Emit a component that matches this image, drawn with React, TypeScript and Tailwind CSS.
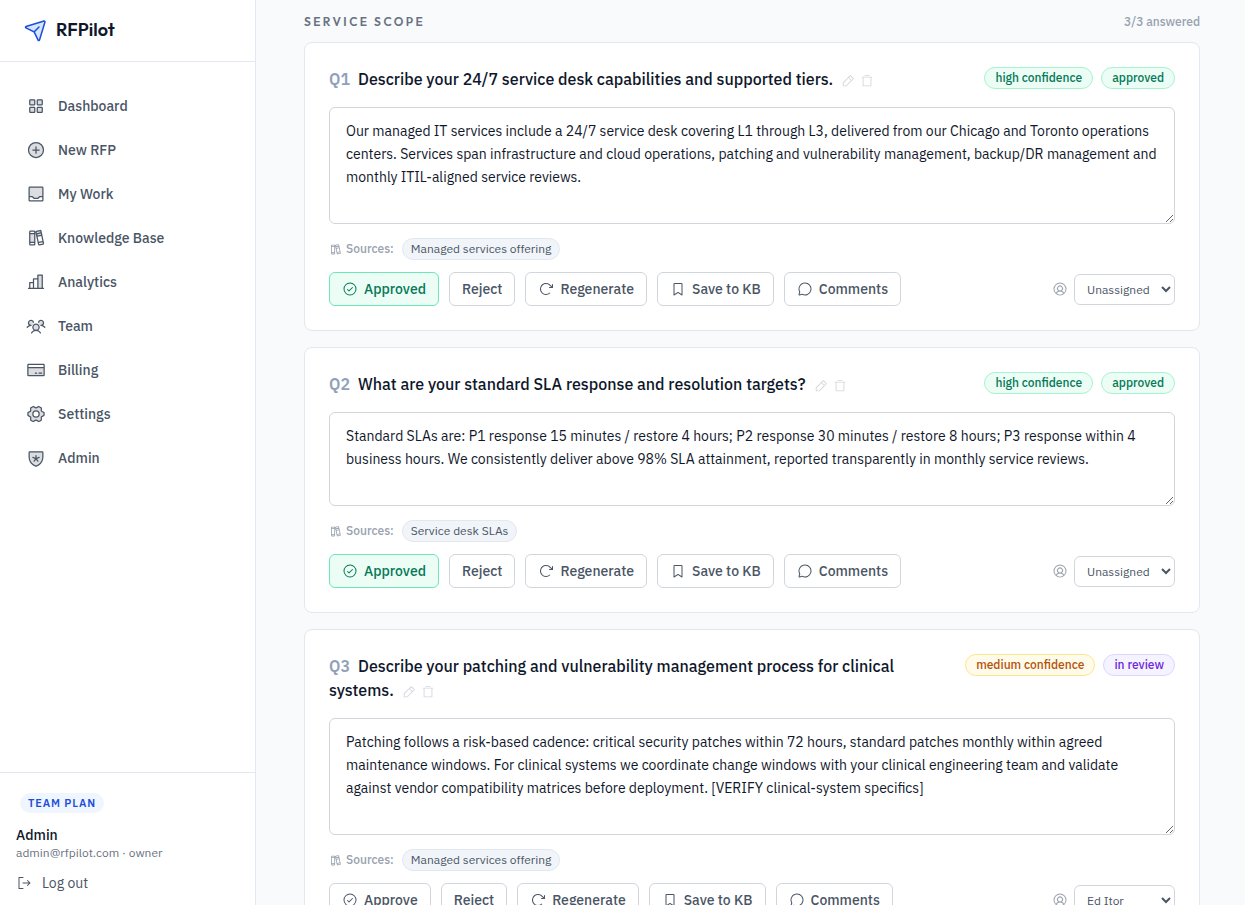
import { useState } from 'react';
import clsx from 'clsx';
import type { IconType } from 'react-icons';
import {
  PiArrowClockwise,
  PiBookmarkSimple,
  PiBooks,
  PiBooksDuotone,
  PiChartBarDuotone,
  PiChatCircle,
  PiCheckCircle,
  PiCreditCardDuotone,
  PiGearSixDuotone,
  PiPaperPlaneTiltDuotone,
  PiPencilSimple,
  PiPlusCircleDuotone,
  PiShieldStarDuotone,
  PiSignOut,
  PiSquaresFourDuotone,
  PiTrashSimple,
  PiTrayDuotone,
  PiUserCircle,
  PiUsersThreeDuotone,
} from 'react-icons/pi';

type Confidence = 'high' | 'medium';
type Status = 'approved' | 'in review';

interface Question {
  id: number;
  title: string;
  answer: string;
  rows: number;
  source: string;
  confidence: Confidence;
  status: Status;
  assignee: string;
}

const NAV: { label: string; icon: IconType }[] = [
  { label: 'Dashboard', icon: PiSquaresFourDuotone },
  { label: 'New RFP', icon: PiPlusCircleDuotone },
  { label: 'My Work', icon: PiTrayDuotone },
  { label: 'Knowledge Base', icon: PiBooksDuotone },
  { label: 'Analytics', icon: PiChartBarDuotone },
  { label: 'Team', icon: PiUsersThreeDuotone },
  { label: 'Billing', icon: PiCreditCardDuotone },
  { label: 'Settings', icon: PiGearSixDuotone },
  { label: 'Admin', icon: PiShieldStarDuotone },
];

const QUESTIONS: Question[] = [
  {
    id: 1,
    title: 'Describe your 24/7 service desk capabilities and supported tiers.',
    answer:
      'Our managed IT services include a 24/7 service desk covering L1 through L3, delivered from our Chicago and Toronto operations centers. Services span infrastructure and cloud operations, patching and vulnerability management, backup/DR management and monthly ITIL-aligned service reviews.',
    rows: 4,
    source: 'Managed services offering',
    confidence: 'high',
    status: 'approved',
    assignee: 'Unassigned',
  },
  {
    id: 2,
    title: 'What are your standard SLA response and resolution targets?',
    answer:
      'Standard SLAs are: P1 response 15 minutes / restore 4 hours; P2 response 30 minutes / restore 8 hours; P3 response within 4 business hours. We consistently deliver above 98% SLA attainment, reported transparently in monthly service reviews.',
    rows: 3,
    source: 'Service desk SLAs',
    confidence: 'high',
    status: 'approved',
    assignee: 'Unassigned',
  },
  {
    id: 3,
    title: 'Describe your patching and vulnerability management process for clinical systems.',
    answer:
      'Patching follows a risk-based cadence: critical security patches within 72 hours, standard patches monthly within agreed maintenance windows. For clinical systems we coordinate change windows with your clinical engineering team and validate against vendor compatibility matrices before deployment. [VERIFY clinical-system specifics]',
    rows: 4,
    source: 'Managed services offering',
    confidence: 'medium',
    status: 'in review',
    assignee: 'Ed Itor',
  },
];

const BADGE_STYLES: Record<Confidence | Status, string> = {
  high: 'border-[#a7f3d0] bg-[#ecfdf5] text-[#047857]',
  medium: 'border-[#fde68a] bg-[#fffbeb] text-[#b45309]',
  approved: 'border-[#a7f3d0] bg-[#ecfdf5] text-[#047857]',
  'in review': 'border-[#ddd6fe] bg-[#f5f3ff] text-[#6d28d9]',
};

function Badge({ kind, label }: { kind: Confidence | Status; label: string }) {
  return (
    <span
      className={clsx(
        'rounded-full border px-2.5 py-0.5 text-xs font-medium whitespace-nowrap',
        BADGE_STYLES[kind],
      )}
    >
      {label}
    </span>
  );
}

function ActionButton({
  icon: Icon,
  label,
  active = false,
  onClick,
}: {
  icon?: IconType;
  label: string;
  active?: boolean;
  onClick?: () => void;
}) {
  return (
    <button
      type="button"
      onClick={onClick}
      className={clsx(
        'flex items-center gap-1.5 rounded-md border px-3 py-1.5 text-sm font-medium',
        active
          ? 'border-[#6ee7b7] bg-[#ecfdf5] text-[#047857]'
          : 'border-gray-300 bg-white text-gray-600 hover:bg-slate-50',
      )}
    >
      {Icon && <Icon size={16} />}
      {label}
    </button>
  );
}

function Sidebar() {
  return (
    <aside className="flex w-64 shrink-0 flex-col border-r border-slate-200 bg-white">
      <div className="flex h-[62px] items-center gap-2 border-b border-slate-200 px-6 pb-0.5">
        <PiPaperPlaneTiltDuotone size={24} className="text-[#1d4ed8] [&_path:first-child]:fill-blue-500" />
        <span className="font-['Outfit','Open_Sans',sans-serif] text-lg font-semibold text-slate-900">
          RFPilot
        </span>
      </div>

      <nav className="flex flex-1 flex-col gap-1 px-3 py-6">
        {NAV.map(({ label, icon: Icon }) => (
          <a
            key={label}
            href="#"
            className="flex items-center gap-3 rounded-md px-3.5 py-2.5 text-sm font-medium text-gray-600 hover:bg-slate-50"
          >
            <Icon size={20} />
            {label}
          </a>
        ))}
      </nav>

      <div className="border-t border-slate-200 px-4 pt-4 pb-3">
        <span className="ml-1 inline-block rounded-full bg-blue-50 px-2 py-0.5 text-[11px]/4 font-semibold tracking-[0.08em] text-[#1d4ed8] uppercase">
          Team plan
        </span>
        <p className="mt-3 text-sm font-medium text-slate-900">Admin</p>
        <p className="text-xs text-gray-500">admin@rfpilot.com · owner</p>
        <button type="button" className="mt-3 flex items-center gap-2.5 text-sm text-gray-600">
          <PiSignOut size={16} />
          Log out
        </button>
      </div>
    </aside>
  );
}

function QuestionCard({ question }: { question: Question }) {
  const [answer, setAnswer] = useState(question.answer);
  const [status, setStatus] = useState<Status>(question.status);
  const [assignee, setAssignee] = useState(question.assignee);
  const approved = status === 'approved';
  const assigneeId = `assignee-${question.id}`;

  return (
    <article className="rounded-lg border border-slate-200 bg-white p-6">
      <div className="flex items-start justify-between gap-4">
        <h3 className="max-w-[600px] text-base font-medium text-slate-900">
          <span className="mr-2 font-semibold text-slate-400">{`Q${question.id}`}</span>
          <label htmlFor={`answer-${question.id}`}>{question.title}</label>
          <span className="ml-2 inline-flex gap-[5px] align-middle text-gray-300">
            <button type="button" aria-label="Edit question">
              <PiPencilSimple size={14} />
            </button>
            <button type="button" aria-label="Delete question">
              <PiTrashSimple size={14} />
            </button>
          </span>
        </h3>
        <div className="flex shrink-0 gap-2">
          <Badge kind={question.confidence} label={`${question.confidence} confidence`} />
          <Badge kind={status} label={status} />
        </div>
      </div>

      <textarea
        id={`answer-${question.id}`}
        rows={question.rows}
        value={answer}
        onChange={(e) => setAnswer(e.target.value)}
        className="mt-4 block w-full resize-y rounded-md border border-gray-300 bg-white px-4 py-3 text-sm leading-relaxed text-slate-900"
      />

      <div className="mt-3.5 flex items-center gap-2 text-xs">
        <span className="flex items-center gap-1 font-medium text-gray-400">
          <PiBooks size={13} />
          Sources:
        </span>
        <span className="rounded-full border border-slate-200 bg-slate-100 px-2 py-0.5 text-gray-600">
          {question.source}
        </span>
      </div>

      <div className="mt-3 flex items-center gap-2.5">
        <ActionButton
          icon={PiCheckCircle}
          label={approved ? 'Approved' : 'Approve'}
          active={approved}
          onClick={() => setStatus('approved')}
        />
        <ActionButton label="Reject" onClick={() => setStatus('in review')} />
        <ActionButton icon={PiArrowClockwise} label="Regenerate" />
        <ActionButton icon={PiBookmarkSimple} label="Save to KB" />
        <ActionButton icon={PiChatCircle} label="Comments" />

        <div className="ml-auto flex items-center gap-1.5">
          <label htmlFor={assigneeId} aria-label="Assignee" className="text-gray-400">
            <PiUserCircle size={16} />
          </label>
          <select
            id={assigneeId}
            value={assignee}
            onChange={(e) => setAssignee(e.target.value)}
            className="w-[101px] rounded-md border border-gray-300 bg-white px-2 py-1.5 text-xs text-gray-600"
          >
            <option>Unassigned</option>
            <option>Admin</option>
            <option>Ed Itor</option>
          </select>
        </div>
      </div>
    </article>
  );
}

export default function App() {
  return (
    <div className="flex h-screen bg-slate-50 font-['IBM_Plex_Sans','Open_Sans',sans-serif] text-slate-900">
      <Sidebar />
      <main className="min-w-0 flex-1 overflow-y-auto pt-3 pr-8 pb-12 pl-12 [scrollbar-width:none]">
        <section className="max-w-4xl">
          <div className="mb-2.5 flex items-center justify-between">
            <h2 className="font-['Outfit','Open_Sans',sans-serif] text-xs/5 font-semibold tracking-[0.2em] text-gray-500 uppercase">
              Service scope
            </h2>
            <span className="text-xs font-medium text-gray-400">3/3 answered</span>
          </div>
          <div className="flex flex-col gap-4">
            {QUESTIONS.map((q) => (
              <QuestionCard key={q.id} question={q} />
            ))}
          </div>
        </section>
      </main>
    </div>
  );
}
